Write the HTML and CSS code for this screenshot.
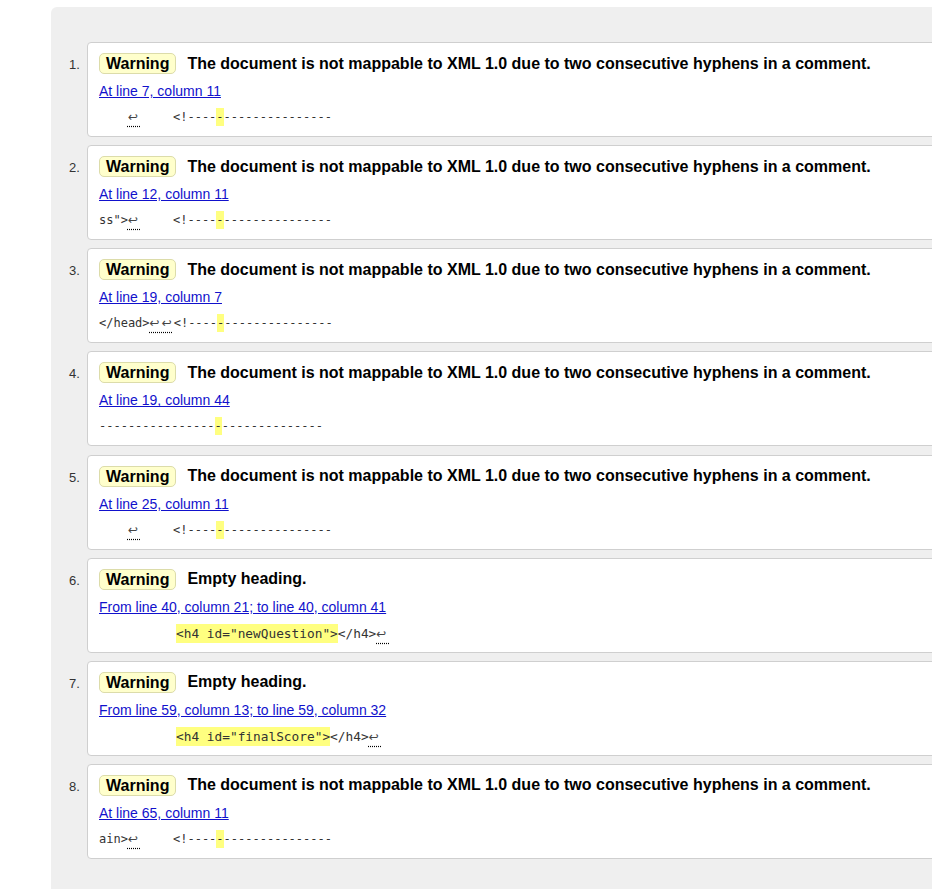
FILE: index.html
```html
<!DOCTYPE html>
<html>
<head>
<meta charset="utf-8">
<link rel="stylesheet" href="styles.css">
</head>
<body>
<div class="results">
<ol class="msgs">
<li class="item">
<p class="msg"><strong class="badge">Warning</strong><span class="text">The document is not mappable to XML 1.0 due to two consecutive hyphens in a comment.</span></p>
<p class="loc"><a href="#">At line 7, column 11</a></p>
<p class="code">    <span class="ret">↩</span>	&lt;!----<span class="hl">-</span>---------------</p>
</li>
<li class="item">
<p class="msg"><strong class="badge">Warning</strong><span class="text">The document is not mappable to XML 1.0 due to two consecutive hyphens in a comment.</span></p>
<p class="loc"><a href="#">At line 12, column 11</a></p>
<p class="code">ss"&gt;<span class="ret">↩</span>	&lt;!----<span class="hl">-</span>---------------</p>
</li>
<li class="item">
<p class="msg"><strong class="badge">Warning</strong><span class="text">The document is not mappable to XML 1.0 due to two consecutive hyphens in a comment.</span></p>
<p class="loc"><a href="#">At line 19, column 7</a></p>
<p class="code">&lt;/head&gt;<span class="ret pair">↩↩</span>&lt;!----<span class="hl">-</span>---------------</p>
</li>
<li class="item">
<p class="msg"><strong class="badge">Warning</strong><span class="text">The document is not mappable to XML 1.0 due to two consecutive hyphens in a comment.</span></p>
<p class="loc"><a href="#">At line 19, column 44</a></p>
<p class="code">----------------<span class="hl">-</span>--------------</p>
</li>
<li class="item">
<p class="msg"><strong class="badge">Warning</strong><span class="text">The document is not mappable to XML 1.0 due to two consecutive hyphens in a comment.</span></p>
<p class="loc"><a href="#">At line 25, column 11</a></p>
<p class="code">    <span class="ret">↩</span>	&lt;!----<span class="hl">-</span>---------------</p>
</li>
<li class="item">
<p class="msg"><strong class="badge">Warning</strong><span class="text">Empty heading.</span></p>
<p class="loc"><a href="#">From line 40, column 21; to line 40, column 41</a></p>
<p class="code wide">	<span class="hl">&lt;h4 id="newQuestion"&gt;</span>&lt;/h4&gt;<span class="ret">↩</span></p>
</li>
<li class="item">
<p class="msg"><strong class="badge">Warning</strong><span class="text">Empty heading.</span></p>
<p class="loc"><a href="#">From line 59, column 13; to line 59, column 32</a></p>
<p class="code wide">	<span class="hl">&lt;h4 id="finalScore"&gt;</span>&lt;/h4&gt;<span class="ret">↩</span></p>
</li>
<li class="item">
<p class="msg"><strong class="badge">Warning</strong><span class="text">The document is not mappable to XML 1.0 due to two consecutive hyphens in a comment.</span></p>
<p class="loc"><a href="#">At line 65, column 11</a></p>
<p class="code">ain&gt;<span class="ret">↩</span>	&lt;!----<span class="hl">-</span>---------------</p>
</li>
</ol>
</div>
</body>
</html>
```
FILE: styles.css
```css
html, body {
  margin: 0;
  padding: 0;
  overflow: hidden;
  background: #fff;
}
body {
  font-family: "Liberation Sans", Arial, sans-serif;
  color: #000;
}
.results {
  margin: 7px 0 0 51px;
  width: 1000px;
  padding: 35px 0 60px 0;
  background: #efefef;
  border-top-left-radius: 6px;
}
.msgs {
  margin: 0;
  padding: 0 0 0 36px;
  list-style: decimal outside;
}
.item {
  background: #fff;
  border: 1px solid #cfcfcf;
  border-radius: 4px;
  padding: 10px 11px;
  margin: 0;
}
.item + .item {
  margin-top: 8.15px;
}
.item::marker {
  font-family: "Liberation Sans", Arial, sans-serif;
  font-size: 13px;
  color: #333;
  content: counter(list-item) ".  ";
}
.msg {
  margin: 0;
  height: 21px;
  display: flex;
  align-items: center;
  font-size: 16px;
  font-weight: bold;
}
.badge {
  display: inline-block;
  background: #ffffcc;
  border: 1px solid #dcdcaa;
  border-radius: 5px;
  padding: 0 6px;
  line-height: 19px;
  margin-right: 11px;
}
.loc {
  margin: 9px 0 0 0;
  line-height: 17px;
  font-size: 14px;
}
.loc a {
  color: #1111cc;
  text-decoration: underline;
}
.code {
  margin: 9px 0 0 0;
  line-height: 17px;
  height: 17px;
  font-family: "DejaVu Sans Mono", "Liberation Mono", monospace;
  font-size: 12px;
  color: #333;
  white-space: pre;
  tab-size: 74px;
}
.code.wide {
  font-size: 12.8px;
  tab-size: 77px;
}
.hl {
  background: #ffff80;
  padding: 2px 0;
}
.ret {
  font-family: "DejaVu Sans", sans-serif;
  font-size: 12px;
  letter-spacing: 3px;
  color: #444;
  text-decoration: underline dotted #000;
  text-underline-offset: 5px;
}
.ret.pair {
  letter-spacing: 2px;
}
```
